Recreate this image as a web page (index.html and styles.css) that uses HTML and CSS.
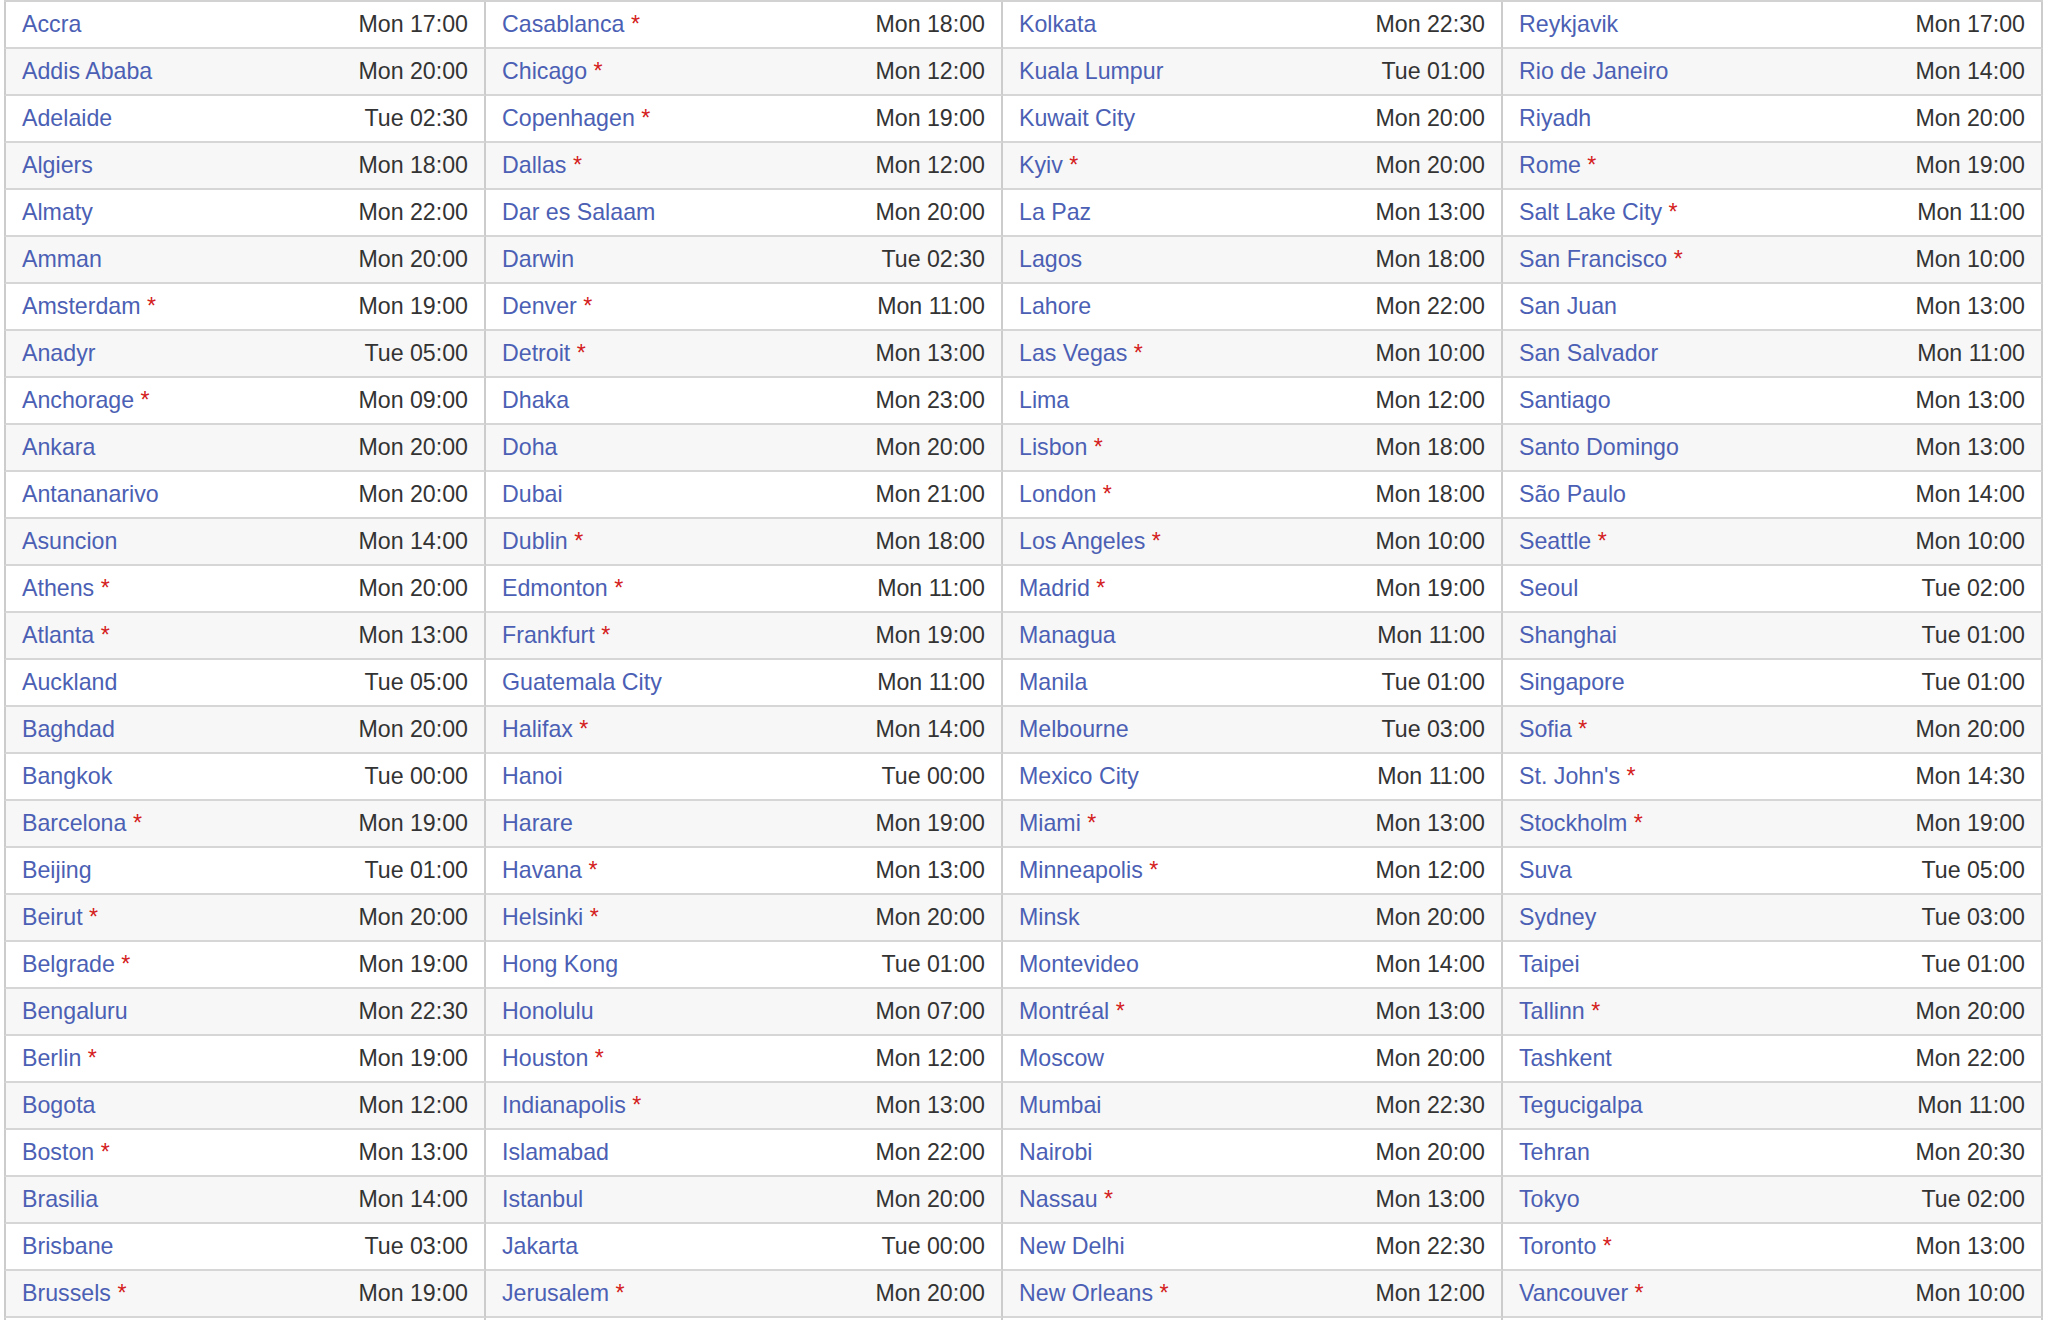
FILE: index.html
```html
<!DOCTYPE html>
<html lang="en">
<head>
<meta charset="utf-8">
<title>World Clock</title>
<link rel="stylesheet" href="styles.css">
</head>
<body>
<table class="clock">
<colgroup>
<col class="n1"><col class="t">
<col class="n2"><col class="t">
<col class="n3"><col class="t">
<col class="n4"><col class="t">
</colgroup>
<tbody>
<tr><td class="name first"><a href="#">Accra</a></td><td class="time">Mon 17:00</td><td class="name"><a href="#">Casablanca</a> <span class="dst">*</span></td><td class="time">Mon 18:00</td><td class="name"><a href="#">Kolkata</a></td><td class="time">Mon 22:30</td><td class="name"><a href="#">Reykjavik</a></td><td class="time">Mon 17:00</td></tr>
<tr><td class="name first"><a href="#">Addis Ababa</a></td><td class="time">Mon 20:00</td><td class="name"><a href="#">Chicago</a> <span class="dst">*</span></td><td class="time">Mon 12:00</td><td class="name"><a href="#">Kuala Lumpur</a></td><td class="time">Tue 01:00</td><td class="name"><a href="#">Rio de Janeiro</a></td><td class="time">Mon 14:00</td></tr>
<tr><td class="name first"><a href="#">Adelaide</a></td><td class="time">Tue 02:30</td><td class="name"><a href="#">Copenhagen</a> <span class="dst">*</span></td><td class="time">Mon 19:00</td><td class="name"><a href="#">Kuwait City</a></td><td class="time">Mon 20:00</td><td class="name"><a href="#">Riyadh</a></td><td class="time">Mon 20:00</td></tr>
<tr><td class="name first"><a href="#">Algiers</a></td><td class="time">Mon 18:00</td><td class="name"><a href="#">Dallas</a> <span class="dst">*</span></td><td class="time">Mon 12:00</td><td class="name"><a href="#">Kyiv</a> <span class="dst">*</span></td><td class="time">Mon 20:00</td><td class="name"><a href="#">Rome</a> <span class="dst">*</span></td><td class="time">Mon 19:00</td></tr>
<tr><td class="name first"><a href="#">Almaty</a></td><td class="time">Mon 22:00</td><td class="name"><a href="#">Dar es Salaam</a></td><td class="time">Mon 20:00</td><td class="name"><a href="#">La Paz</a></td><td class="time">Mon 13:00</td><td class="name"><a href="#">Salt Lake City</a> <span class="dst">*</span></td><td class="time">Mon 11:00</td></tr>
<tr><td class="name first"><a href="#">Amman</a></td><td class="time">Mon 20:00</td><td class="name"><a href="#">Darwin</a></td><td class="time">Tue 02:30</td><td class="name"><a href="#">Lagos</a></td><td class="time">Mon 18:00</td><td class="name"><a href="#">San Francisco</a> <span class="dst">*</span></td><td class="time">Mon 10:00</td></tr>
<tr><td class="name first"><a href="#">Amsterdam</a> <span class="dst">*</span></td><td class="time">Mon 19:00</td><td class="name"><a href="#">Denver</a> <span class="dst">*</span></td><td class="time">Mon 11:00</td><td class="name"><a href="#">Lahore</a></td><td class="time">Mon 22:00</td><td class="name"><a href="#">San Juan</a></td><td class="time">Mon 13:00</td></tr>
<tr><td class="name first"><a href="#">Anadyr</a></td><td class="time">Tue 05:00</td><td class="name"><a href="#">Detroit</a> <span class="dst">*</span></td><td class="time">Mon 13:00</td><td class="name"><a href="#">Las Vegas</a> <span class="dst">*</span></td><td class="time">Mon 10:00</td><td class="name"><a href="#">San Salvador</a></td><td class="time">Mon 11:00</td></tr>
<tr><td class="name first"><a href="#">Anchorage</a> <span class="dst">*</span></td><td class="time">Mon 09:00</td><td class="name"><a href="#">Dhaka</a></td><td class="time">Mon 23:00</td><td class="name"><a href="#">Lima</a></td><td class="time">Mon 12:00</td><td class="name"><a href="#">Santiago</a></td><td class="time">Mon 13:00</td></tr>
<tr><td class="name first"><a href="#">Ankara</a></td><td class="time">Mon 20:00</td><td class="name"><a href="#">Doha</a></td><td class="time">Mon 20:00</td><td class="name"><a href="#">Lisbon</a> <span class="dst">*</span></td><td class="time">Mon 18:00</td><td class="name"><a href="#">Santo Domingo</a></td><td class="time">Mon 13:00</td></tr>
<tr><td class="name first"><a href="#">Antananarivo</a></td><td class="time">Mon 20:00</td><td class="name"><a href="#">Dubai</a></td><td class="time">Mon 21:00</td><td class="name"><a href="#">London</a> <span class="dst">*</span></td><td class="time">Mon 18:00</td><td class="name"><a href="#">São Paulo</a></td><td class="time">Mon 14:00</td></tr>
<tr><td class="name first"><a href="#">Asuncion</a></td><td class="time">Mon 14:00</td><td class="name"><a href="#">Dublin</a> <span class="dst">*</span></td><td class="time">Mon 18:00</td><td class="name"><a href="#">Los Angeles</a> <span class="dst">*</span></td><td class="time">Mon 10:00</td><td class="name"><a href="#">Seattle</a> <span class="dst">*</span></td><td class="time">Mon 10:00</td></tr>
<tr><td class="name first"><a href="#">Athens</a> <span class="dst">*</span></td><td class="time">Mon 20:00</td><td class="name"><a href="#">Edmonton</a> <span class="dst">*</span></td><td class="time">Mon 11:00</td><td class="name"><a href="#">Madrid</a> <span class="dst">*</span></td><td class="time">Mon 19:00</td><td class="name"><a href="#">Seoul</a></td><td class="time">Tue 02:00</td></tr>
<tr><td class="name first"><a href="#">Atlanta</a> <span class="dst">*</span></td><td class="time">Mon 13:00</td><td class="name"><a href="#">Frankfurt</a> <span class="dst">*</span></td><td class="time">Mon 19:00</td><td class="name"><a href="#">Managua</a></td><td class="time">Mon 11:00</td><td class="name"><a href="#">Shanghai</a></td><td class="time">Tue 01:00</td></tr>
<tr><td class="name first"><a href="#">Auckland</a></td><td class="time">Tue 05:00</td><td class="name"><a href="#">Guatemala City</a></td><td class="time">Mon 11:00</td><td class="name"><a href="#">Manila</a></td><td class="time">Tue 01:00</td><td class="name"><a href="#">Singapore</a></td><td class="time">Tue 01:00</td></tr>
<tr><td class="name first"><a href="#">Baghdad</a></td><td class="time">Mon 20:00</td><td class="name"><a href="#">Halifax</a> <span class="dst">*</span></td><td class="time">Mon 14:00</td><td class="name"><a href="#">Melbourne</a></td><td class="time">Tue 03:00</td><td class="name"><a href="#">Sofia</a> <span class="dst">*</span></td><td class="time">Mon 20:00</td></tr>
<tr><td class="name first"><a href="#">Bangkok</a></td><td class="time">Tue 00:00</td><td class="name"><a href="#">Hanoi</a></td><td class="time">Tue 00:00</td><td class="name"><a href="#">Mexico City</a></td><td class="time">Mon 11:00</td><td class="name"><a href="#">St. John's</a> <span class="dst">*</span></td><td class="time">Mon 14:30</td></tr>
<tr><td class="name first"><a href="#">Barcelona</a> <span class="dst">*</span></td><td class="time">Mon 19:00</td><td class="name"><a href="#">Harare</a></td><td class="time">Mon 19:00</td><td class="name"><a href="#">Miami</a> <span class="dst">*</span></td><td class="time">Mon 13:00</td><td class="name"><a href="#">Stockholm</a> <span class="dst">*</span></td><td class="time">Mon 19:00</td></tr>
<tr><td class="name first"><a href="#">Beijing</a></td><td class="time">Tue 01:00</td><td class="name"><a href="#">Havana</a> <span class="dst">*</span></td><td class="time">Mon 13:00</td><td class="name"><a href="#">Minneapolis</a> <span class="dst">*</span></td><td class="time">Mon 12:00</td><td class="name"><a href="#">Suva</a></td><td class="time">Tue 05:00</td></tr>
<tr><td class="name first"><a href="#">Beirut</a> <span class="dst">*</span></td><td class="time">Mon 20:00</td><td class="name"><a href="#">Helsinki</a> <span class="dst">*</span></td><td class="time">Mon 20:00</td><td class="name"><a href="#">Minsk</a></td><td class="time">Mon 20:00</td><td class="name"><a href="#">Sydney</a></td><td class="time">Tue 03:00</td></tr>
<tr><td class="name first"><a href="#">Belgrade</a> <span class="dst">*</span></td><td class="time">Mon 19:00</td><td class="name"><a href="#">Hong Kong</a></td><td class="time">Tue 01:00</td><td class="name"><a href="#">Montevideo</a></td><td class="time">Mon 14:00</td><td class="name"><a href="#">Taipei</a></td><td class="time">Tue 01:00</td></tr>
<tr><td class="name first"><a href="#">Bengaluru</a></td><td class="time">Mon 22:30</td><td class="name"><a href="#">Honolulu</a></td><td class="time">Mon 07:00</td><td class="name"><a href="#">Montréal</a> <span class="dst">*</span></td><td class="time">Mon 13:00</td><td class="name"><a href="#">Tallinn</a> <span class="dst">*</span></td><td class="time">Mon 20:00</td></tr>
<tr><td class="name first"><a href="#">Berlin</a> <span class="dst">*</span></td><td class="time">Mon 19:00</td><td class="name"><a href="#">Houston</a> <span class="dst">*</span></td><td class="time">Mon 12:00</td><td class="name"><a href="#">Moscow</a></td><td class="time">Mon 20:00</td><td class="name"><a href="#">Tashkent</a></td><td class="time">Mon 22:00</td></tr>
<tr><td class="name first"><a href="#">Bogota</a></td><td class="time">Mon 12:00</td><td class="name"><a href="#">Indianapolis</a> <span class="dst">*</span></td><td class="time">Mon 13:00</td><td class="name"><a href="#">Mumbai</a></td><td class="time">Mon 22:30</td><td class="name"><a href="#">Tegucigalpa</a></td><td class="time">Mon 11:00</td></tr>
<tr><td class="name first"><a href="#">Boston</a> <span class="dst">*</span></td><td class="time">Mon 13:00</td><td class="name"><a href="#">Islamabad</a></td><td class="time">Mon 22:00</td><td class="name"><a href="#">Nairobi</a></td><td class="time">Mon 20:00</td><td class="name"><a href="#">Tehran</a></td><td class="time">Mon 20:30</td></tr>
<tr><td class="name first"><a href="#">Brasilia</a></td><td class="time">Mon 14:00</td><td class="name"><a href="#">Istanbul</a></td><td class="time">Mon 20:00</td><td class="name"><a href="#">Nassau</a> <span class="dst">*</span></td><td class="time">Mon 13:00</td><td class="name"><a href="#">Tokyo</a></td><td class="time">Tue 02:00</td></tr>
<tr><td class="name first"><a href="#">Brisbane</a></td><td class="time">Tue 03:00</td><td class="name"><a href="#">Jakarta</a></td><td class="time">Tue 00:00</td><td class="name"><a href="#">New Delhi</a></td><td class="time">Mon 22:30</td><td class="name"><a href="#">Toronto</a> <span class="dst">*</span></td><td class="time">Mon 13:00</td></tr>
<tr><td class="name first"><a href="#">Brussels</a> <span class="dst">*</span></td><td class="time">Mon 19:00</td><td class="name"><a href="#">Jerusalem</a> <span class="dst">*</span></td><td class="time">Mon 20:00</td><td class="name"><a href="#">New Orleans</a> <span class="dst">*</span></td><td class="time">Mon 12:00</td><td class="name"><a href="#">Vancouver</a> <span class="dst">*</span></td><td class="time">Mon 10:00</td></tr>
<tr><td class="name first"></td><td class="time"></td><td class="name"></td><td class="time"></td><td class="name"></td><td class="time"></td><td class="name"></td><td class="time"></td></tr>
</tbody>
</table>
</body>
</html>
```

FILE: styles.css
```css
html, body {
  margin: 0;
  background: #ffffff;
  overflow: hidden;
}

body {
  padding-left: 4px;
  font-family: "Liberation Sans", Arial, Helvetica, sans-serif;
  font-size: 23.2px;
}

.clock {
  border-collapse: separate;
  border-spacing: 0;
  table-layout: fixed;
  width: 2039px;
  border-top: 2px solid #d2d2d2;
}

.clock col.t { width: 160px; }
.clock col.n1 { width: 322px; }
.clock col.n2 { width: 357px; }
.clock col.n3 { width: 340px; }
.clock col.n4 { width: 380px; }

.clock td {
  padding: 0 16px;
  height: 45px;
  line-height: 45px;
  border-bottom: 2px solid #d6d6d6;
  white-space: nowrap;
  overflow: hidden;
  color: #333333;
}

.clock tr:nth-child(even) td {
  background: #f7f7f7;
}

.clock td.first {
  border-left: 2px solid #cccccc;
}

.clock td.time {
  text-align: right;
  border-right: 2px solid #cccccc;
}

.clock a {
  color: #4b5fb4;
  text-decoration: none;
}

.clock .dst {
  color: #d42020;
}
```
